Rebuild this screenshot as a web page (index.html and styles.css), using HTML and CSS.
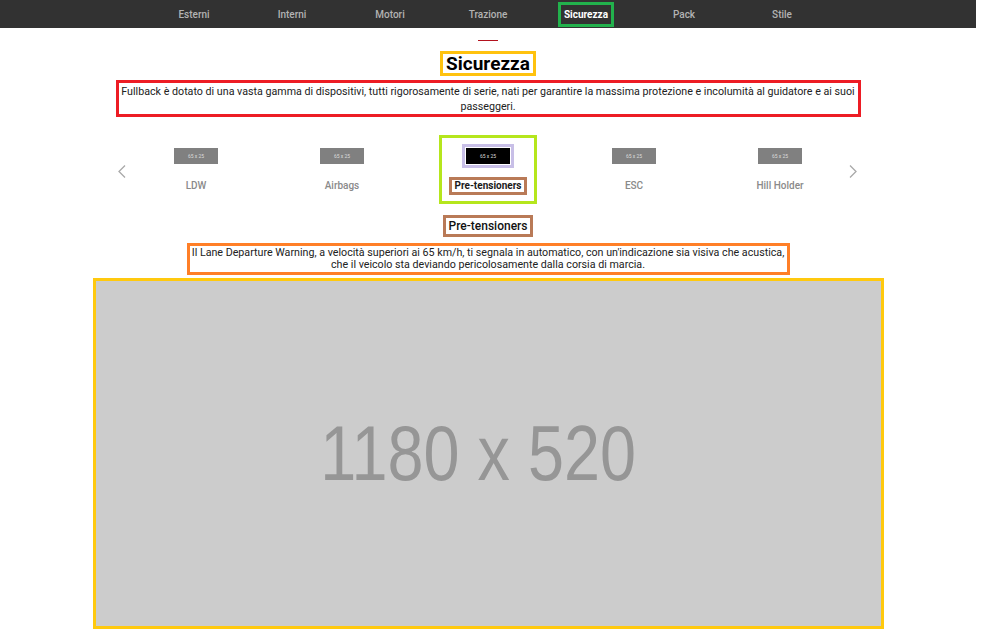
FILE: index.html
```html
<!DOCTYPE html>
<html lang="it">
<head>
<meta charset="utf-8">
<title>Sicurezza</title>
<link rel="stylesheet" href="styles.css">
</head>
<body>
<div class="page">
  <nav class="topnav">
    <a class="nav-item"><span>Esterni</span></a>
    <a class="nav-item"><span>Interni</span></a>
    <a class="nav-item"><span>Motori</span></a>
    <a class="nav-item"><span>Trazione</span></a>
    <a class="nav-item active"><span>Sicurezza</span></a>
    <a class="nav-item"><span>Pack</span></a>
    <a class="nav-item"><span>Stile</span></a>
  </nav>
  <main class="content">
    <div class="divider"></div>
    <h1 class="title">Sicurezza</h1>
    <p class="intro">Fullback è dotato di una vasta gamma di dispositivi, tutti rigorosamente di serie, nati per garantire la massima protezione e incolumità al guidatore e ai suoi passeggeri.</p>
    <div class="carousel">
      <span class="arrow arrow-left"><svg width="8" height="13" viewBox="0 0 8 13"><path d="M7 0.5 L1 6.5 L7 12.5" fill="none" stroke="#a9a9a9" stroke-width="1.3"/></svg></span>
      <div class="slide"><div class="item"><div class="thumb-wrap"><div class="thumb">65 x 25</div></div><div class="label">LDW</div></div></div>
      <div class="slide"><div class="item"><div class="thumb-wrap"><div class="thumb">65 x 25</div></div><div class="label">Airbags</div></div></div>
      <div class="slide"><div class="item active"><div class="thumb-wrap"><div class="thumb">65 x 25</div></div><div class="label">Pre-tensioners</div></div></div>
      <div class="slide"><div class="item"><div class="thumb-wrap"><div class="thumb">65 x 25</div></div><div class="label">ESC</div></div></div>
      <div class="slide"><div class="item"><div class="thumb-wrap"><div class="thumb">65 x 25</div></div><div class="label">Hill Holder</div></div></div>
      <span class="arrow arrow-right"><svg width="8" height="13" viewBox="0 0 8 13"><path d="M1 0.5 L7 6.5 L1 12.5" fill="none" stroke="#a9a9a9" stroke-width="1.3"/></svg></span>
    </div>
    <h2 class="subtitle">Pre-tensioners</h2>
    <p class="desc">Il Lane Departure Warning, a velocità superiori ai 65 km/h, ti segnala in automatico, con un'indicazione sia visiva che acustica, che il veicolo sta deviando pericolosamente dalla corsia di marcia.</p>
    <div class="placeholder"><span>1180 x 520</span></div>
  </main>
</div>
</body>
</html>
```
FILE: styles.css
```css
* { box-sizing: border-box; }
html, body { margin: 0; padding: 0; background: #fff; }
body { font-family: Roboto, "Liberation Sans", Arial, sans-serif; }
.page { width: 976px; }

.topnav {
  height: 28px;
  background: #323232;
  display: flex;
  justify-content: center;
  align-items: center;
}
.nav-item {
  flex: 0 0 98px;
  display: flex;
  justify-content: center;
  font-size: 10px;
  font-weight: 500;
  color: #b3b3b3;
}
.nav-item span {
  display: block;
  padding: 3px 3px;
  border: 3px solid transparent;
  line-height: 13px;
}
.nav-item.active span {
  border-color: #22b14c;
  color: #fff;
  font-weight: 700;
}

.content {
  display: flex;
  flex-direction: column;
  align-items: center;
}
.divider {
  width: 20px;
  height: 1px;
  background: #b3121e;
  margin-top: 12px;
}
.title {
  margin: 10px 0 0;
  border: 3px solid #ffc20e;
  padding: 0 3px;
  font-size: 19px;
  line-height: 19px;
  font-weight: 700;
  color: #000;
}
.intro {
  margin: 4px 0 0;
  width: 745px;
  border: 3px solid #ed1c24;
  padding: 1px 2px 0;
  font-size: 10.7px;
  line-height: 15px;
  height: 37px;
  text-align: center;
  color: #222;
}

.carousel {
  position: relative;
  width: 745px;
  margin-top: 18px;
  display: flex;
  justify-content: center;
}
.arrow {
  position: absolute;
  top: 30px;
  line-height: 0;
}
.arrow-left { left: 2px; }
.arrow-right { right: 4px; }
.slide {
  flex: 0 0 146px;
  display: flex;
  justify-content: center;
}
.item {
  width: 98px;
  height: 69px;
  border: 3px solid transparent;
  padding: 6px 0;
  display: flex;
  flex-direction: column;
  align-items: center;
  gap: 9px;
}
.item.active { border-color: #b5e61d; }
.thumb-wrap {
  border: 3px solid transparent;
  padding: 1px;
}
.item.active .thumb-wrap { border-color: #c8bfe7; background: #fff; }
.thumb {
  width: 44px;
  height: 16px;
  background: #808080;
  color: #dcdcdc;
  font-size: 5px;
  line-height: 16px;
  text-align: center;
}
.item.active .thumb { background: #000; }
.label {
  border: 3px solid transparent;
  padding: 0 3px;
  font-size: 10px;
  line-height: 12px;
  font-weight: 500;
  color: #8a8a8a;
  white-space: nowrap;
}
.item.active .label {
  border-color: #b97a57;
  color: #1a1a1a;
  font-weight: 700;
}

.subtitle {
  margin: 11px 0 0;
  border: 3px solid #b97a57;
  padding: 0 3px;
  font-size: 12px;
  line-height: 16px;
  font-weight: 500;
  color: #111;
}
.desc {
  margin: 6px 0 0;
  width: 603px;
  height: 32px;
  border: 3px solid #ff7f27;
  padding: 1px 2px 0;
  font-size: 10.7px;
  line-height: 12px;
  text-align: center;
  color: #222;
}
.placeholder {
  margin-top: 3px;
  width: 791px;
  height: 351px;
  border: 3px solid #ffc90e;
  background: #cccccc;
  display: flex;
  justify-content: center;
  align-items: center;
}
.placeholder span {
  font-family: "Liberation Sans", Arial, sans-serif;
  font-size: 78px;
  color: #969696;
  transform: translateX(-10px) scaleX(0.83);
  white-space: nowrap;
}
```
